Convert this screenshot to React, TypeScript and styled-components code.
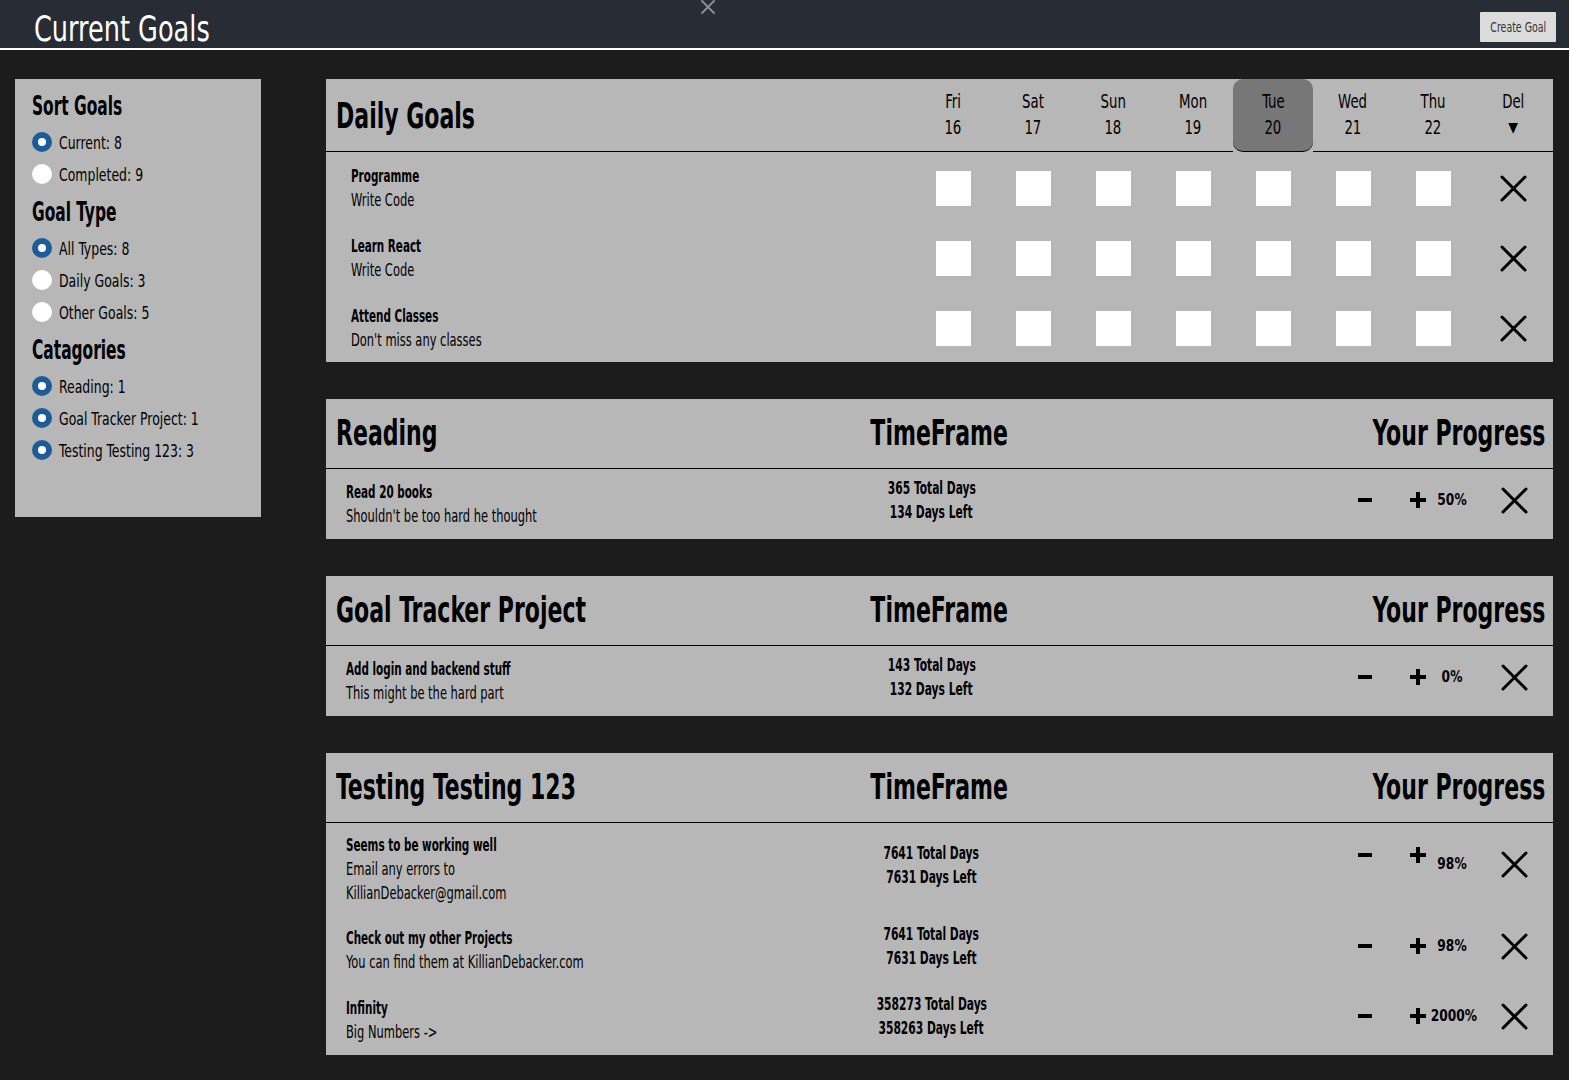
import React from "react";
import styled, { createGlobalStyle } from "styled-components";

// The screenshot uses a tall condensed face; DejaVu Sans Condensed squeezed a bit further stands in for it.
const FONT = `"DejaVu Sans Condensed", "DejaVu Sans", sans-serif`;

const GlobalStyle = createGlobalStyle`
  body {
    margin: 0;
    background-color: #1c1c1c;
    font-family: ${FONT};
    color: #000;
  }
  * {
    box-sizing: border-box;
  }
`;

const Page = styled.div`
  min-height: 1080px;
  background-color: #1c1c1c;
`;

const TopBar = styled.header`
  position: relative;
  display: flex;
  align-items: center;
  justify-content: space-between;
  height: 50px;
  padding: 0 13px 0 34px;
  background-color: #282c35;
  border-bottom: 2px solid #fff;
`;

const PageTitle = styled.h1`
  margin: 8px 0 0;
  font-size: 36px;
  font-weight: 400;
  color: #fff;
  white-space: nowrap;
  transform: scaleX(0.79);
  transform-origin: left center;
`;

const CreateButton = styled.button`
  width: 76px;
  height: 30px;
  margin-top: 6px;
  padding: 0;
  border: none;
  border-radius: 1px;
  background-color: #dcdcdc;
  color: #333;
  font-family: ${FONT};
  font-size: 14px;
  white-space: nowrap;

  span {
    display: inline-block;
    transform: scaleX(0.75);
  }
`;

const ModalClose = styled.span`
  position: absolute;
  left: 701px;
  top: 0;
  display: flex;
`;

const Content = styled.div`
  display: flex;
  align-items: flex-start;
  gap: 65px;
  padding: 29px 16px 26px 15px;
`;

const Sidebar = styled.aside`
  width: 246px;
  height: 438px;
  flex-shrink: 0;
  padding: 9px 17px;
  background-color: #b7b7b7;
`;

const SideHeading = styled.h2`
  margin: 4px 0 2px;
  height: 36px;
  line-height: 36px;
  font-size: 26px;
  font-weight: 700;
  white-space: nowrap;
  transform: scaleX(0.66);
  transform-origin: left center;

  &:first-child {
    margin-top: 0;
  }
`;

const RadioRow = styled.label`
  display: flex;
  align-items: center;
  gap: 7px;
  height: 32px;
`;

const RadioDot = styled.span<{ $checked?: boolean }>`
  width: 20px;
  height: 20px;
  flex-shrink: 0;
  border-radius: 50%;
  background-color: #fff;
  border: ${(p) => (p.$checked ? "6px solid #1c5d99" : "none")};
`;

const RadioText = styled.span`
  display: inline-block;
  font-size: 18px;
  white-space: nowrap;
  transform: scaleX(0.77);
  transform-origin: left center;
`;

const Main = styled.main`
  flex: 1;
  display: flex;
  flex-direction: column;
  gap: 37px;
`;

const Card = styled.section`
  background-color: #b7b7b7;
`;

const HeadingText = styled.span<{ $origin: "left" | "center" | "right" }>`
  display: inline-block;
  font-size: 36px;
  font-weight: 700;
  white-space: nowrap;
  transform: scaleX(0.68);
  transform-origin: ${(p) => p.$origin} center;
`;

const DailyGrid = styled.div`
  display: grid;
  grid-template-columns: 1fr repeat(8, 80px);
`;

const DailyTitleCell = styled.div`
  display: flex;
  align-items: center;
  height: 73px;
  padding-left: 10px;
  border-bottom: 1px solid #000;
`;

const DayCell = styled.div<{ $today?: boolean }>`
  display: flex;
  flex-direction: column;
  align-items: center;
  justify-content: center;
  height: 73px;
  padding-bottom: 2px;
  border-bottom: 1px solid #000;
  line-height: 26px;
  background-color: ${(p) => (p.$today ? "#777777" : "transparent")};
  border-radius: ${(p) => (p.$today ? "10px" : "0")};
`;

const DayLabel = styled.span`
  display: block;
  font-size: 19px;
  transform: scaleX(0.78);
`;

const Arrow = styled.span`
  font-size: 14px;
  line-height: 26px;
`;

const DailyInfo = styled.div`
  display: flex;
  flex-direction: column;
  justify-content: center;
  height: 70px;
  padding-left: 25px;
  padding-top: 1px;
  line-height: 24px;
`;

const GoalName = styled.span`
  display: block;
  font-size: 17px;
  font-weight: 700;
  white-space: nowrap;
  transform: scaleX(0.68);
  transform-origin: left center;
`;

const GoalDesc = styled.span`
  display: block;
  font-size: 17px;
  font-weight: 400;
  white-space: nowrap;
  transform: scaleX(0.75);
  transform-origin: left center;
`;

const CheckCell = styled.div`
  display: flex;
  align-items: center;
  justify-content: center;
  height: 70px;
  padding-top: 3px;
`;

const CheckBox = styled.span`
  width: 35px;
  height: 35px;
  background-color: #fff;
`;

const GoalHeader = styled.div`
  display: grid;
  grid-template-columns: 1fr 1fr 1fr;
  align-items: center;
  height: 70px;
  padding-bottom: 2px;
  border-bottom: 1px solid #000;
`;

const HeadCell = styled.div<{ $align: "left" | "center" | "right" }>`
  text-align: ${(p) => p.$align};
  padding: ${(p) => (p.$align === "left" ? "0 0 0 10px" : p.$align === "right" ? "0 8px 0 0" : "0")};
`;

const GoalRow = styled.div`
  display: grid;
  grid-template-columns: 1fr 1fr 1fr;
  align-items: center;
  min-height: 70px;
  padding: 10px 0;
  line-height: 24px;
`;

const GoalInfo = styled.div`
  display: flex;
  flex-direction: column;
  padding-left: 20px;
`;

const TimeFrame = styled.div`
  display: flex;
  flex-direction: column;
  align-items: center;
  padding-right: 16px;
  margin-top: -8px;
`;

const TimeLine = styled.span`
  display: block;
  font-size: 17px;
  font-weight: 700;
  white-space: nowrap;
  transform: scaleX(0.7);
`;

const Controls = styled.div<{ $wrapped?: boolean }>`
  display: flex;
  align-items: center;
  justify-content: flex-end;
  padding-right: 25px;
  margin-top: ${(p) => (p.$wrapped ? "-10px" : "-8px")};
`;

const StepButton = styled.span<{ $lift?: boolean }>`
  display: flex;
  align-items: center;
  justify-content: center;
  width: 18px;
  height: 18px;
  transform: ${(p) => (p.$lift ? "translateY(-9px)" : "none")};
`;

const MinusButton = styled(StepButton)`
  margin-right: 35px;
`;

const Percent = styled.span`
  width: 50px;
  text-align: center;
  font-size: 16px;
  font-weight: 700;
  white-space: nowrap;
  transform: scaleX(0.85);
`;

const DeleteButton = styled.span`
  display: flex;
  margin-left: 24px;
`;

const XIcon = ({ size = 27, color = "#000", stroke = 3 }: { size?: number; color?: string; stroke?: number }) => (
  <svg width={size} height={size} viewBox="0 0 27 27">
    <path
      d="M2 2 L25 25 M25 2 L2 25"
      stroke={color}
      strokeWidth={(stroke * 27) / size}
      strokeLinecap="round"
      fill="none"
    />
  </svg>
);

const MinusIcon = () => (
  <svg width="14" height="4" viewBox="0 0 14 4">
    <rect x="0" y="0" width="14" height="4" fill="#000" />
  </svg>
);

const PlusIcon = () => (
  <svg width="16" height="16" viewBox="0 0 16 16">
    <rect x="0" y="6" width="16" height="4" fill="#000" />
    <rect x="6" y="0" width="4" height="16" fill="#000" />
  </svg>
);

const days = [
  { d: "Fri", n: "16" },
  { d: "Sat", n: "17" },
  { d: "Sun", n: "18" },
  { d: "Mon", n: "19" },
  { d: "Tue", n: "20", today: true },
  { d: "Wed", n: "21" },
  { d: "Thu", n: "22" },
];

const dailyGoals = [
  { name: "Programme", desc: "Write Code" },
  { name: "Learn React", desc: "Write Code" },
  { name: "Attend Classes", desc: "Don't miss any classes" },
];

type Goal = {
  name: string;
  desc: string[];
  total: string;
  left: string;
  pct: string;
  wrapped?: boolean;
};

const categories: { title: string; goals: Goal[] }[] = [
  {
    title: "Reading",
    goals: [
      { name: "Read 20 books", desc: ["Shouldn't be too hard he thought"], total: "365", left: "134", pct: "50%" },
    ],
  },
  {
    title: "Goal Tracker Project",
    goals: [
      { name: "Add login and backend stuff", desc: ["This might be the hard part"], total: "143", left: "132", pct: "0%" },
    ],
  },
  {
    title: "Testing Testing 123",
    goals: [
      {
        name: "Seems to be working well",
        desc: ["Email any errors to", "KillianDebacker@gmail.com"],
        total: "7641",
        left: "7631",
        pct: "98%",
        wrapped: true,
      },
      {
        name: "Check out my other Projects",
        desc: ["You can find them at KillianDebacker.com"],
        total: "7641",
        left: "7631",
        pct: "98%",
      },
      { name: "Infinity", desc: ["Big Numbers ->"], total: "358273", left: "358263", pct: "2000%" },
    ],
  },
];

const sidebar = [
  {
    heading: "Sort Goals",
    items: [
      { label: "Current: 8", checked: true },
      { label: "Completed: 9", checked: false },
    ],
  },
  {
    heading: "Goal Type",
    items: [
      { label: "All Types: 8", checked: true },
      { label: "Daily Goals: 3", checked: false },
      { label: "Other Goals: 5", checked: false },
    ],
  },
  {
    heading: "Catagories",
    items: [
      { label: "Reading: 1", checked: true },
      { label: "Goal Tracker Project: 1", checked: true },
      { label: "Testing Testing 123: 3", checked: true },
    ],
  },
];

export default function App() {
  return (
    <Page>
      <GlobalStyle />
      <TopBar>
        <PageTitle>Current Goals</PageTitle>
        <ModalClose>
          <XIcon size={14} color="#8a8d94" stroke={2} />
        </ModalClose>
        <CreateButton>
          <span>Create Goal</span>
        </CreateButton>
      </TopBar>
      <Content>
        <Sidebar>
          {sidebar.map((s) => (
            <React.Fragment key={s.heading}>
              <SideHeading>{s.heading}</SideHeading>
              {s.items.map((it) => (
                <RadioRow key={it.label}>
                  <RadioDot $checked={it.checked} />
                  <RadioText>{it.label}</RadioText>
                </RadioRow>
              ))}
            </React.Fragment>
          ))}
        </Sidebar>
        <Main>
          <Card>
            <DailyGrid>
              <DailyTitleCell>
                <HeadingText $origin="left">Daily Goals</HeadingText>
              </DailyTitleCell>
              {days.map((d) => (
                <DayCell key={d.d} $today={d.today}>
                  <DayLabel>{d.d}</DayLabel>
                  <DayLabel>{d.n}</DayLabel>
                </DayCell>
              ))}
              <DayCell>
                <DayLabel>Del</DayLabel>
                <Arrow>▼</Arrow>
              </DayCell>
              {dailyGoals.map((g) => (
                <React.Fragment key={g.name}>
                  <DailyInfo>
                    <GoalName>{g.name}</GoalName>
                    <GoalDesc>{g.desc}</GoalDesc>
                  </DailyInfo>
                  {days.map((d) => (
                    <CheckCell key={d.d}>
                      <CheckBox />
                    </CheckCell>
                  ))}
                  <CheckCell>
                    <XIcon />
                  </CheckCell>
                </React.Fragment>
              ))}
            </DailyGrid>
          </Card>

          {categories.map((c) => (
            <Card key={c.title}>
              <GoalHeader>
                <HeadCell $align="left">
                  <HeadingText $origin="left">{c.title}</HeadingText>
                </HeadCell>
                <HeadCell $align="center">
                  <HeadingText $origin="center">TimeFrame</HeadingText>
                </HeadCell>
                <HeadCell $align="right">
                  <HeadingText $origin="right">Your Progress</HeadingText>
                </HeadCell>
              </GoalHeader>
              {c.goals.map((g) => (
                <GoalRow key={g.name}>
                  <GoalInfo>
                    <GoalName>{g.name}</GoalName>
                    {g.desc.map((line) => (
                      <GoalDesc key={line}>{line}</GoalDesc>
                    ))}
                  </GoalInfo>
                  <TimeFrame>
                    <TimeLine>{g.total} Total Days</TimeLine>
                    <TimeLine>{g.left} Days Left</TimeLine>
                  </TimeFrame>
                  <Controls $wrapped={g.wrapped}>
                    <MinusButton $lift={g.wrapped}>
                      <MinusIcon />
                    </MinusButton>
                    <StepButton $lift={g.wrapped}>
                      <PlusIcon />
                    </StepButton>
                    <Percent>{g.pct}</Percent>
                    <DeleteButton>
                      <XIcon />
                    </DeleteButton>
                  </Controls>
                </GoalRow>
              ))}
            </Card>
          ))}
        </Main>
      </Content>
    </Page>
  );
}
